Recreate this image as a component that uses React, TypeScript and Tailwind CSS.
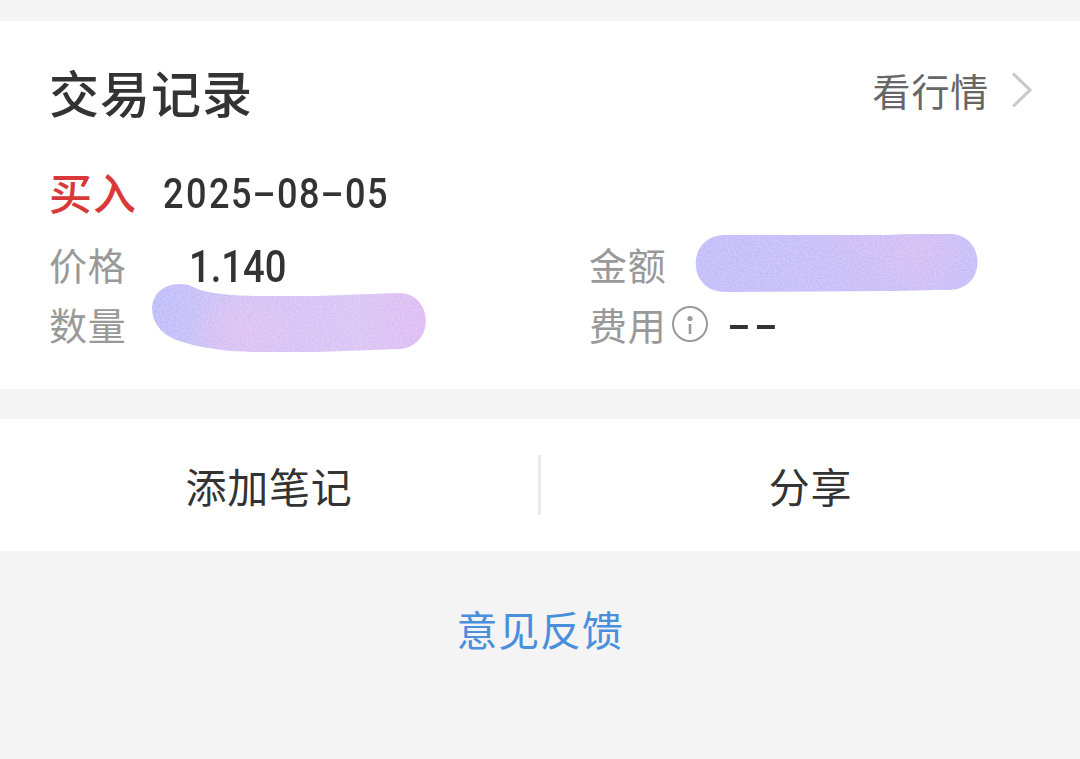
interface DateTextProps {
  value: string;
}

// The dash takes the same advance as a digit
function DateText({ value }: DateTextProps) {
  return (
    <span className="inline-flex font-['Roboto'] text-[43px] leading-[48px] font-medium">
      {value.split("").map((char, i) => (
        <span key={i} className="w-[22.7px] flex justify-center">
          <span className={char === "-" ? "inline-block scale-x-[1.6] scale-y-[0.9]" : "inline-block scale-x-[0.84]"}>
            {char}
          </span>
        </span>
      ))}
    </span>
  );
}

function ChevronIcon() {
  return (
    <svg width="22" height="38" viewBox="0 0 22 38" fill="none">
      <path d="M2 2.5L19 19L2 35.5" stroke="#c8c8c8" strokeWidth="3" />
    </svg>
  );
}

function InfoIcon() {
  return (
    <svg width="36" height="36" viewBox="0 0 36 36" fill="none">
      <circle cx="18" cy="18" r="17" stroke="#999999" strokeWidth="2" />
      <circle cx="18" cy="12.5" r="2.6" fill="#999999" />
      <path d="M18 18V28" stroke="#999999" strokeWidth="2.6" />
    </svg>
  );
}

function AmountMask() {
  return (
    <svg width="284" height="60" viewBox="0 0 284 60">
      <defs>
        <linearGradient id="amount-base" x1="0" x2="1">
          <stop offset="0" stopColor="#bfbcfa" />
          <stop offset="0.5" stopColor="#c3bcf8" />
          <stop offset="0.8" stopColor="#cabdf6" />
          <stop offset="1" stopColor="#c0bcfa" />
        </linearGradient>
        <radialGradient id="amount-glow">
          <stop offset="0" stopColor="#d3bdf3" />
          <stop offset="1" stopColor="#d3bdf3" stopOpacity="0" />
        </radialGradient>
        <filter id="amount-grain" x="0" y="0" width="1" height="1">
          <feTurbulence type="fractalNoise" baseFrequency="0.6" numOctaves="2" result="noise" />
          <feColorMatrix in="noise" type="matrix" values="0 0 0 0 0.92  0 0 0 0 0.76  0 0 0 0 0.93  0.9 0 0 0 -0.3" />
          <feComposite in2="SourceGraphic" operator="in" />
        </filter>
        <clipPath id="amount-clip">
          <path d="M30 2 L195 2 C210 1 225 1 254 1 C292 1 292 57 254 57 C225 57 210 58 195 58 L30 59 C-9 59 -9 2 30 2Z" />
        </clipPath>
      </defs>
      <g clipPath="url(#amount-clip)">
        <rect width="284" height="60" fill="url(#amount-base)" />
        <ellipse cx="220" cy="18" rx="58" ry="38" fill="url(#amount-glow)" />
        <ellipse cx="155" cy="8" rx="30" ry="18" fill="url(#amount-glow)" opacity="0.5" />
        <rect width="284" height="60" filter="url(#amount-grain)" />
      </g>
    </svg>
  );
}

function QuantityMask() {
  return (
    <svg width="275" height="70" viewBox="0 0 275 70">
      <defs>
        <linearGradient id="quantity-base" x1="0" x2="1">
          <stop offset="0" stopColor="#b9bbfa" />
          <stop offset="0.14" stopColor="#c1bdf8" />
          <stop offset="0.32" stopColor="#d1c0f5" />
          <stop offset="0.75" stopColor="#d7c3f5" />
          <stop offset="1" stopColor="#dcb9f3" />
        </linearGradient>
        <radialGradient id="quantity-glow">
          <stop offset="0" stopColor="#dbc0f0" />
          <stop offset="1" stopColor="#dbc0f0" stopOpacity="0" />
        </radialGradient>
        <filter id="quantity-grain" x="0" y="0" width="1" height="1">
          <feTurbulence type="fractalNoise" baseFrequency="0.6" numOctaves="2" seed="4" result="noise" />
          <feColorMatrix in="noise" type="matrix" values="0 0 0 0 0.92  0 0 0 0 0.78  0 0 0 0 0.94  0.9 0 0 0 -0.3" />
          <feComposite in2="SourceGraphic" operator="in" />
        </filter>
        <clipPath id="quantity-clip">
          <path d="M28 1 C37 1 41 4 48 7 C62 11 82 13 107 13 L165 13 L246 10 C283 10 283 65 246 66 L165 69 L107 69 C75 69 42 64 22 56 C-9 43 -7 1 28 1Z" />
        </clipPath>
      </defs>
      <g clipPath="url(#quantity-clip)">
        <rect width="275" height="70" fill="url(#quantity-base)" />
        <ellipse cx="95" cy="48" rx="60" ry="40" fill="url(#quantity-glow)" />
        <rect width="275" height="70" filter="url(#quantity-grain)" />
      </g>
    </svg>
  );
}

export default function App() {
  return (
    <div className="w-[1080px] h-[759px] overflow-hidden bg-[#f4f4f4] pt-[21px] font-['Noto_Sans_CJK_SC',sans-serif] text-[#333333]">
      {/* Trade record */}
      <section className="h-[368px] bg-white pl-[49px] pr-[47px] pt-[33px]">
        <div className="h-[72px] flex items-center justify-between">
          <h1 className="pt-px text-[50px] leading-[72px] font-medium tracking-[1px]">交易记录</h1>
          <button className="flex items-center gap-[22px] text-[38px] leading-[56px] tracking-[0.8px] text-[#666666]">
            <span>看行情</span>
            <ChevronIcon />
          </button>
        </div>

        <div className="mt-[34px] h-[62px] flex items-center">
          <span className="w-[113px] text-[43px] leading-[62px] font-medium tracking-[1px] text-[#d93838]">买入</span>
          <span className="pt-[4px]">
            <DateText value="2025-08-05" />
          </span>
        </div>

        <div className="mt-[12px] grid grid-cols-[540px_1fr] text-[38px] leading-[60px] tracking-[0.8px] text-[#999999]">
          <div className="h-[60px] flex items-center">
            价格
            <span className="ml-[62px] pt-[5px] origin-left scale-x-[0.85] font-['Roboto'] text-[45px] font-medium tracking-[0px] text-[#333333]">
              1.140
            </span>
          </div>
          <div className="h-[60px] flex items-center">
            金额
            <div className="ml-[28px] -mt-[2px]">
              <AmountMask />
            </div>
          </div>
          <div className="h-[60px] flex items-center">
            数量
            <div className="ml-[25px] -mt-[13px]">
              <QuantityMask />
            </div>
          </div>
          <div className="h-[60px] flex items-center">
            费用
            <div className="ml-[5px]">
              <InfoIcon />
            </div>
            <span className="ml-[22px] pt-[3px] flex gap-[8px] font-['Roboto'] text-[42px] font-medium tracking-[0px] text-[#333333]">
              <span className="w-[19px] flex justify-center">
                <span className="scale-x-[1.65]">-</span>
              </span>
              <span className="w-[19px] flex justify-center">
                <span className="scale-x-[1.65]">-</span>
              </span>
            </span>
          </div>
        </div>
      </section>

      {/* Actions */}
      <section className="mt-[30px] h-[132px] bg-white flex items-center text-[41px] tracking-[0.8px]">
        <button className="w-[538px] pb-px leading-[60px]">添加笔记</button>
        <div className="w-[3px] h-[60px] bg-[#ebebeb]" />
        <button className="flex-1 pb-px leading-[60px]">分享</button>
      </section>

      <div className="mt-[47px] text-center">
        <a className="text-[41px] leading-[60px] tracking-[0.8px] text-[#4a8fdc]">意见反馈</a>
      </div>
    </div>
  );
}
